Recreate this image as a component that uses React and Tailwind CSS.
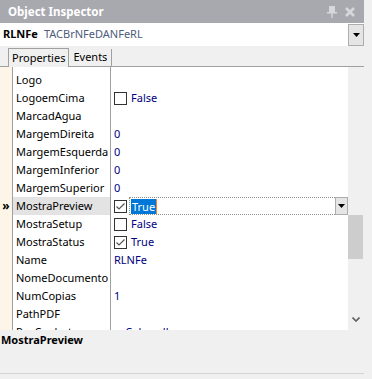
import React from 'react'

const rows = [
  { name: 'Logo' },
  { name: 'LogoemCima', check: false, value: 'False' },
  { name: 'MarcadAgua' },
  { name: 'MargemDireita', value: '0' },
  { name: 'MargemEsquerda', value: '0' },
  { name: 'MargemInferior', value: '0' },
  { name: 'MargemSuperior', value: '0' },
  { name: 'MostraPreview', check: true, value: 'True', editing: true },
  { name: 'MostraSetup', check: false, value: 'False' },
  { name: 'MostraStatus', check: true, value: 'True' },
  { name: 'Name', value: 'RLNFe' },
  { name: 'NomeDocumento' },
  { name: 'NumCopias', value: '1' },
  { name: 'PathPDF' },
  { name: 'PosCanhoto', value: 'prCabecalho' },
]

const CheckBox = ({ checked }) => (
  <span className="w-[13px] h-[13px] border border-[#333333] bg-white flex items-center justify-center shrink-0">
    {checked && (
      <svg width="11" height="11" viewBox="0 0 11 11">
        <path d="M1.5 5.5 L4 8 L9.5 2.5" fill="none" stroke="#555555" strokeWidth="1.2" />
      </svg>
    )}
  </span>
)

const Row = ({ row }) => (
  <div className="flex h-[18px]">
    <div className="w-[13px] shrink-0 border-r border-[#a0a0a0] flex items-center justify-center text-[12px] font-bold leading-none text-black">
      {row.editing ? '»' : ''}
    </div>
    <div className={`w-[98px] shrink-0 border-r border-[#a0a0a0] pl-[3px] flex items-center overflow-hidden whitespace-nowrap text-black ${row.editing ? 'bg-[#e3e3e3]' : ''}`}>
      {row.name}
    </div>
    <div className="flex-1 flex items-center pl-[3px] text-[#000080] whitespace-nowrap">
      {row.check !== undefined && <CheckBox checked={row.check} />}
      {row.editing ? (
        <div className="flex-1 flex items-center h-full ml-[2px]">
          <div className="flex-1 h-full flex items-center border-y border-l border-dotted border-[#909090] pl-[1px]">
            <span className="bg-[#0078d7] text-white px-[1px] leading-[15px]">True</span>
            <span className="w-px h-[15px] bg-[#ff7f27]" />
          </div>
          <div className="w-[13px] h-full border border-[#adadad] bg-[#e5e5e5] flex items-center justify-center">
            <svg width="7" height="4" viewBox="0 0 7 4"><path d="M0 0 H7 L3.5 4 Z" fill="#000" /></svg>
          </div>
        </div>
      ) : (
        row.value && <span className={row.check !== undefined ? 'ml-[4px]' : ''}>{row.value}</span>
      )}
    </div>
  </div>
)

export default function App() {
  return (
    <div className="w-[372px] h-[379px] bg-[#f0f0f0] overflow-hidden text-[11px]" style={{ fontFamily: '"Noto Sans", "Open Sans", sans-serif' }}>
      <div className="w-[364px] flex flex-col">
        <div className="h-[23px] bg-[#a8a8af] flex items-center justify-between px-[8px]">
          <span className="text-white font-bold text-[11.5px]">Object Inspector</span>
          <div className="flex items-center gap-[8px] pr-[1px]">
            <svg width="10" height="12" viewBox="0 0 10 12" fill="#d6d6dc">
              <rect x="2" y="0" width="6" height="6" />
              <rect x="0" y="6" width="10" height="1.5" />
              <rect x="4.3" y="7" width="1.4" height="5" />
            </svg>
            <svg width="10" height="10" viewBox="0 0 10 10" stroke="#d6d6dc" strokeWidth="2.6">
              <path d="M1 1 L9 9 M9 1 L1 9" />
            </svg>
          </div>
        </div>
        <div className="h-[23px] bg-white flex items-center">
          <div className="flex-1 pl-[3px] flex items-center gap-[6px]">
            <span className="font-bold text-black">RLNFe</span>
            <span className="text-[#4e5c7c]">TACBrNFeDANFeRL</span>
          </div>
          <div className="w-[16px] h-[22px] border border-[#adadad] bg-[#e5e5e5] flex items-center justify-center">
            <svg width="7" height="4" viewBox="0 0 7 4"><path d="M0 0 H7 L3.5 4 Z" fill="#000" /></svg>
          </div>
        </div>
        <div className="h-[19px] flex items-end border-b border-[#a0a0a0] mt-[2px]">
          <div className="w-[8px]" />
          <div className="h-[19px] px-[3px] border-x border-t border-[#a0a0a0] bg-[#f0f0f0] flex items-center -mb-px text-black">Properties</div>
          <div className="h-[17px] px-[4px] border-r border-[#a0a0a0] flex items-center text-black">Events</div>
        </div>
        <div className="flex h-[263px]">
          <div className="flex-1 bg-white overflow-hidden">
            <div className="flex h-[4px]">
              <div className="w-[13px] border-r border-[#a0a0a0] bg-[#fdf6e8]" />
              <div className="w-[98px] border-r border-[#a0a0a0]" />
            </div>
            <div className="bg-[linear-gradient(to_right,#fdf6e8_12px,transparent_12px)]">
              {rows.map(row => <Row key={row.name} row={row} />)}
            </div>
          </div>
          <div className="w-[16px] bg-[#f0f0f0] flex flex-col items-start">
            <div className="h-[148px]" />
            <div className="w-[15px] h-[44px] bg-[#cdcdcd]" />
            <div className="flex-1" />
            <div className="w-[15px] h-[14px] flex items-center justify-center mb-[4px]">
              <svg width="8" height="5" viewBox="0 0 8 5"><path d="M0.5 0.5 L4 4 L7.5 0.5" fill="none" stroke="#606060" strokeWidth="1.6" /></svg>
            </div>
          </div>
        </div>
        <div className="h-[44px] border-b border-[#d4d4d4] pl-[1px] pt-[2px]">
          <span className="font-bold text-black">MostraPreview</span>
        </div>
      </div>
    </div>
  )
}
